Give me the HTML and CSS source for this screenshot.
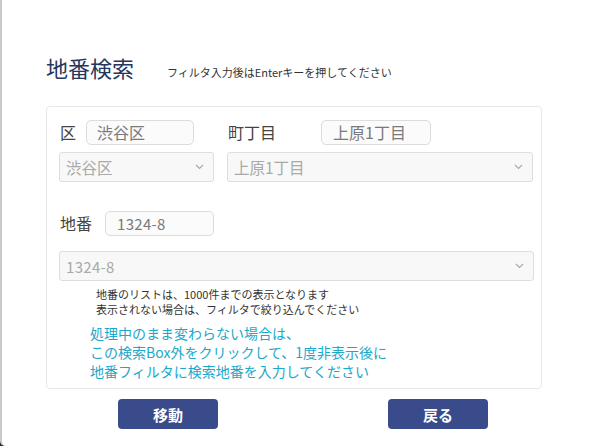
FILE: index.html
```html
<!DOCTYPE html>
<html lang="ja">
<head>
<meta charset="utf-8">
<link rel="stylesheet" href="styles.css">
</head>
<body>
<div class="dialog">
  <div class="head">
    <h1 class="title">地番検索</h1>
    <span class="hint">フィルタ入力後はEnterキーを押してください</span>
  </div>
  <div class="card">
    <div class="grid">
      <div class="field">
        <span class="label">区</span>
        <div class="input w-ku">渋谷区</div>
      </div>
      <div class="field">
        <span class="label label-cho">町丁目</span>
        <div class="input w-cho">上原1丁目</div>
      </div>
      <div class="select"><span>渋谷区</span><svg class="chev" width="9" height="6" viewBox="0 0 9 6"><path d="M1 1 L4.5 4.5 L8 1" fill="none" stroke="#a8a8a8" stroke-width="1.1"/></svg></div>
      <div class="select"><span>上原1丁目</span><svg class="chev" width="9" height="6" viewBox="0 0 9 6"><path d="M1 1 L4.5 4.5 L8 1" fill="none" stroke="#a8a8a8" stroke-width="1.1"/></svg></div>
    </div>
    <div class="field field-chiban">
      <span class="label">地番</span>
      <div class="input w-chiban num">1324-8</div>
    </div>
    <div class="select select-wide"><span class="num">1324-8</span><svg class="chev" width="9" height="6" viewBox="0 0 9 6"><path d="M1 1 L4.5 4.5 L8 1" fill="none" stroke="#a8a8a8" stroke-width="1.1"/></svg></div>
    <p class="note">地番のリストは、1000件までの表示となります<br>表示されない場合は、フィルタで絞り込んでください</p>
    <p class="warn">処理中のまま変わらない場合は、<br>この検索Box外をクリックして、1度非表示後に<br>地番フィルタに検索地番を入力してください</p>
  </div>
  <div class="buttons">
    <button class="btn">移動</button>
    <button class="btn">戻る</button>
  </div>
</div>
</body>
</html>
```

FILE: styles.css
```css
html, body {
  margin: 0;
  padding: 0;
  background: #2a2a2a;
}
body {
  width: 596px;
  height: 446px;
  overflow: hidden;
  font-family: "Noto Sans CJK JP", "Noto Sans", sans-serif;
  color: #333;
}
.dialog {
  box-sizing: border-box;
  width: 596px;
  height: 446px;
  background: #fff;
  border-left: 2px solid #c9c9c9;
  border-bottom-left-radius: 5px;
  padding: 51px 0 0 44px;
}
.head {
  display: flex;
  align-items: baseline;
  height: 32px;
}
.title {
  margin: 0;
  font-size: 22px;
  font-weight: 400;
  line-height: 32px;
  color: #26365c;
}
.hint {
  margin-left: 33px;
  font-size: 11px;
  color: #333;
}
.card {
  box-sizing: border-box;
  margin-top: 23px;
  width: 496px;
  height: 283px;
  border: 1px solid #e8e8e8;
  border-radius: 4px;
  padding: 13px 0 0 12px;
}
.grid {
  display: grid;
  grid-template-columns: 155px 306px;
  column-gap: 13px;
  row-gap: 7px;
}
.field {
  display: flex;
  align-items: center;
  height: 25px;
}
.label {
  font-size: 16px;
  line-height: 25px;
  color: #444;
  margin-left: 1px;
  margin-right: 10px;
}
.label-cho {
  width: 83px;
  margin-right: 10px;
}
.input {
  box-sizing: border-box;
  height: 25px;
  border: 1px solid #dcdcdc;
  border-radius: 5px;
  background: #fbfbfb;
  font-size: 16px;
  line-height: 23px;
  color: #7a7a7a;
  padding-left: 10px;
}
.w-ku { width: 108px; }
.w-cho { width: 110px; padding-left: 11px; }
.w-chiban { width: 109px; height: 25px; padding-left: 11px; font-size: 15px; }
.select {
  box-sizing: border-box;
  height: 30px;
  border: 1px solid #dedede;
  border-radius: 3px;
  background: #f8f8f8;
  display: flex;
  align-items: center;
  justify-content: space-between;
  padding: 0 9px 0 6px;
  font-size: 15.5px;
  color: #a9a9a9;
}
.chev {
  display: block;
}
.field-chiban {
  margin-top: 29px;
}
.field-chiban .label {
  margin-right: 13px;
}
.select-wide {
  margin-top: 15px;
  width: 475px;
  height: 30px;
  font-size: 15px;
}
.num {
  letter-spacing: 0.3px;
}
.note {
  margin: 6px 0 0 37px;
  font-size: 11px;
  line-height: 15px;
  color: #333;
}
.warn {
  margin: 7px 0 0 31px;
  font-size: 14px;
  line-height: 19px;
  color: #1ba8c9;
}
.buttons {
  display: flex;
  margin-top: 10px;
  padding-left: 72px;
  gap: 170px;
}
.btn {
  width: 100px;
  height: 30px;
  border: none;
  border-radius: 4px;
  background: #3a4b8b;
  color: #fff;
  font-family: "Noto Sans CJK JP", sans-serif;
  font-size: 15px;
  font-weight: 700;
  padding: 0;
}
```
